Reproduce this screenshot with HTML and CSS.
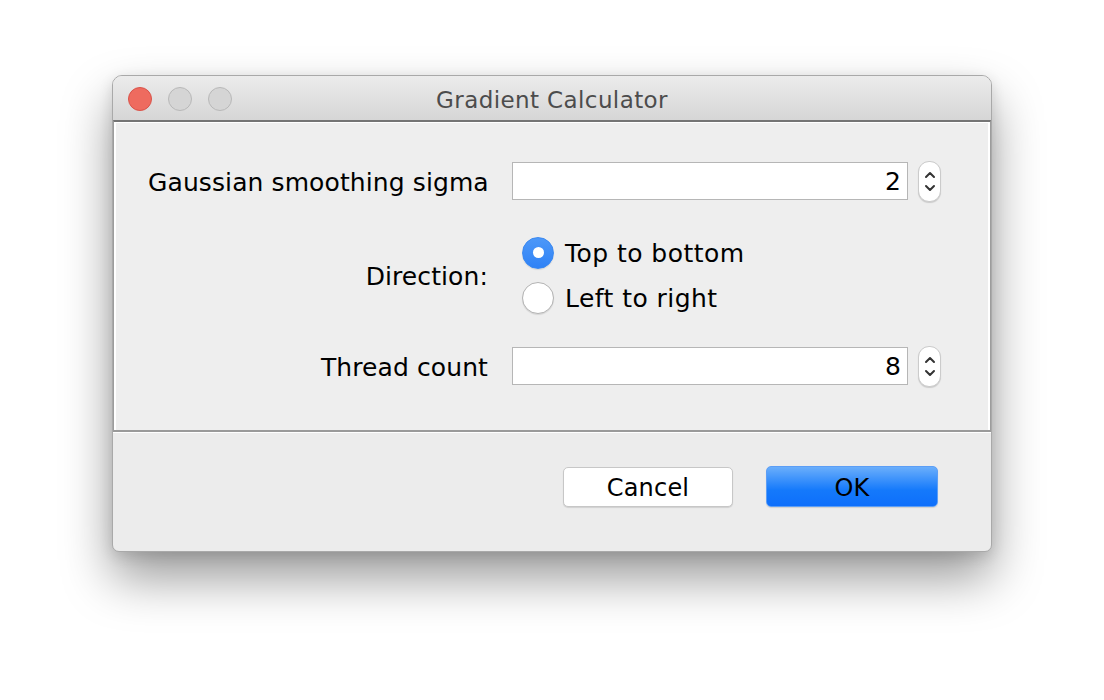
FILE: index.html
```html
<!DOCTYPE html>
<html>
<head>
<meta charset="utf-8">
<title>Gradient Calculator</title>
<link rel="stylesheet" href="styles.css">
</head>
<body>
<div class="window">
  <div class="titlebar">
    <div class="lights">
      <span class="light close"></span>
      <span class="light"></span>
      <span class="light"></span>
    </div>
    <div class="title">Gradient Calculator</div>
  </div>
  <div class="panel">
    <div class="row field-row">
      <label class="label">Gaussian smoothing sigma</label>
      <div class="control">
        <div class="field">2</div>
        <div class="spinner">
          <svg width="12" height="28" viewBox="0 0 12 28"><path d="M2 10 L6 6 L10 10" fill="none" stroke="#333" stroke-width="2" stroke-linecap="round" stroke-linejoin="round"/><path d="M2 19 L6 23 L10 19" fill="none" stroke="#333" stroke-width="2" stroke-linecap="round" stroke-linejoin="round"/></svg>
        </div>
      </div>
    </div>
    <div class="row radio-row">
      <label class="label">Direction:</label>
      <div class="radios">
        <div class="radio-item"><span class="radio checked"></span><span class="radio-text">Top to bottom</span></div>
        <div class="radio-item"><span class="radio"></span><span class="radio-text">Left to right</span></div>
      </div>
    </div>
    <div class="row field-row thread">
      <label class="label">Thread count</label>
      <div class="control">
        <div class="field">8</div>
        <div class="spinner">
          <svg width="12" height="28" viewBox="0 0 12 28"><path d="M2 10 L6 6 L10 10" fill="none" stroke="#333" stroke-width="2" stroke-linecap="round" stroke-linejoin="round"/><path d="M2 19 L6 23 L10 19" fill="none" stroke="#333" stroke-width="2" stroke-linecap="round" stroke-linejoin="round"/></svg>
        </div>
      </div>
    </div>
  </div>
  <div class="footer">
    <button class="btn cancel">Cancel</button>
    <button class="btn ok">OK</button>
  </div>
</div>
</body>
</html>
```

FILE: styles.css
```css
html, body {
  margin: 0;
  padding: 0;
  background: #ffffff;
  width: 1104px;
  height: 700px;
  overflow: hidden;
}
body {
  font-family: "DejaVu Sans", "Liberation Sans", sans-serif;
  padding-top: 75px;
  box-sizing: border-box;
}
.window {
  width: 880px;
  height: 477px;
  margin: 0 auto;
  box-sizing: border-box;
  border: 1px solid #a9a9a9;
  border-radius: 10px 10px 7px 7px;
  background: #ececec;
  box-shadow: 0 26px 50px rgba(0, 0, 0, 0.4), 0 4px 14px rgba(0, 0, 0, 0.12);
  display: flex;
  flex-direction: column;
  overflow: hidden;
}
.titlebar {
  height: 44px;
  flex: none;
  background: linear-gradient(#ececec, #d6d6d6);
  display: flex;
  align-items: center;
  position: relative;
}
.lights {
  display: flex;
  gap: 16px;
  padding-left: 15px;
  padding-top: 2px;
}
.light {
  width: 22px;
  height: 22px;
  border-radius: 50%;
  background: #d5d5d5;
  border: 1px solid #b8b8b8;
}
.light.close {
  background: #ee6b5f;
  border-color: #d9534a;
}
.title {
  position: absolute;
  left: 0;
  right: 0;
  top: 0;
  bottom: 0;
  display: flex;
  align-items: center;
  justify-content: center;
  font-size: 23px;
  letter-spacing: 0.4px;
  color: #4c4c4c;
  padding-top: 3px;
}
.panel {
  flex: none;
  border-top: 2px solid #747474;
  border-left: 1px solid #9c9c9c;
  border-right: 1px solid #9c9c9c;
  border-bottom: 2px solid #9a9a9a;
  box-shadow: inset 2px 1px 0 #ffffff, inset -2px 0 0 #ffffff;
  background: #eeeeee;
  padding: 40px 0 45px 34px;
  display: flex;
  flex-direction: column;
}
.row {
  display: flex;
  align-items: center;
}
.label {
  width: 340px;
  text-align: right;
  white-space: nowrap;
  font-size: 25px;
  letter-spacing: 0.1px;
  color: #000;
  flex: none;
  padding-top: 2px;
}
.field-row {
  height: 38px;
}
.control {
  display: flex;
  align-items: center;
  margin-left: 24px;
}
.field {
  width: 396px;
  height: 38px;
  box-sizing: border-box;
  background: #ffffff;
  border: 1px solid #b6b6b6;
  text-align: right;
  padding-right: 6px;
  font-size: 25px;
  line-height: 38px;
  color: #000;
}
.spinner {
  margin-left: 10px;
  width: 23px;
  height: 41px;
  box-sizing: border-box;
  background: #ffffff;
  border: 1px solid #cbcbcb;
  border-radius: 11px;
  box-shadow: 0 1px 1px rgba(0, 0, 0, 0.15);
  display: flex;
  align-items: center;
  justify-content: center;
}
.radio-row {
  margin-top: 30px;
  height: 90px;
}
.radios {
  margin-left: 34px;
  display: flex;
  flex-direction: column;
}
.radio-item {
  height: 45px;
  display: flex;
  align-items: center;
}
.radio {
  width: 32px;
  height: 32px;
  flex: none;
  box-sizing: border-box;
  border-radius: 50%;
  background: #ffffff;
  border: 1px solid #b3b3b3;
  box-shadow: 0 1px 1px rgba(0, 0, 0, 0.1);
  display: flex;
  align-items: center;
  justify-content: center;
}
.radio.checked {
  background: linear-gradient(#4d98f8, #2f82f6);
  border-color: #3a88f0;
}
.radio.checked::after {
  content: "";
  width: 11px;
  height: 11px;
  border-radius: 50%;
  background: #ffffff;
}
.radio-text {
  margin-left: 11px;
  font-size: 25px;
  letter-spacing: 0.45px;
  color: #000;
  padding-top: 2px;
}
.thread {
  margin-top: 27px;
}
.footer {
  flex: 1;
  border-top: 1px solid #ffffff;
  display: flex;
  justify-content: flex-end;
  align-items: flex-start;
  padding: 33px 53px 0 0;
  gap: 33px;
}
.btn {
  height: 41px;
  box-sizing: border-box;
  border-radius: 5px;
  font-family: "DejaVu Sans", "Liberation Sans", sans-serif;
  font-size: 24px;
  letter-spacing: 0.2px;
  color: #000;
  padding: 2px 0 0;
}
.cancel {
  width: 170px;
  margin-top: 1px;
  height: 40px;
  background: #ffffff;
  border: 1px solid #c7c7c7;
  box-shadow: 0 1px 1px rgba(0, 0, 0, 0.12);
}
.ok {
  width: 172px;
  background: linear-gradient(#6aaefb, #1479fb 60%, #0e6ffb);
  border: 1px solid #5c9ef6;
  box-shadow: 0 1px 1px rgba(0, 0, 0, 0.12);
}
```
